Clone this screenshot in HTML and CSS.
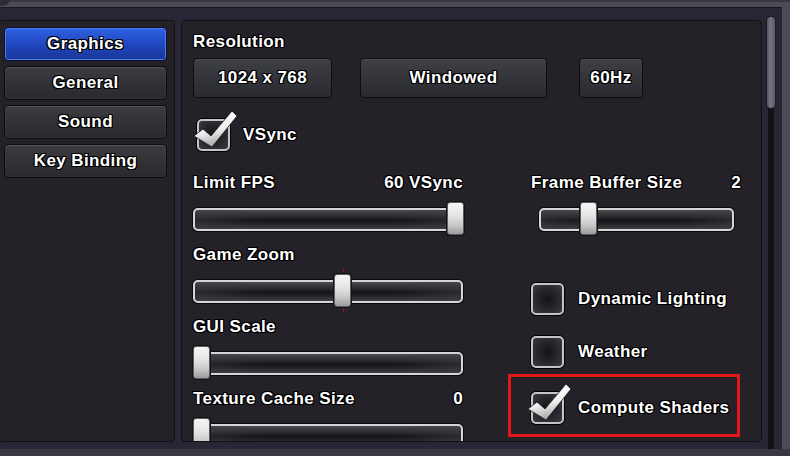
FILE: index.html
```html
<!DOCTYPE html>
<html>
<head>
<meta charset="utf-8">
<title>Graphics Settings</title>
<link rel="stylesheet" href="styles.css">
</head>
<body>
<div class="window">
  <div class="inner">
    <nav class="panel side">
      <div class="tab active">Graphics</div>
      <div class="tab">General</div>
      <div class="tab">Sound</div>
      <div class="tab">Key Binding</div>
    </nav>
    <main class="panel content">
      <div class="title">Resolution</div>
      <div class="btn-row">
        <div class="btn res">1024 x 768</div>
        <div class="btn mode">Windowed</div>
        <div class="btn hz">60Hz</div>
      </div>
      <div class="check-row vsync">
        <span class="box">
          <svg class="tick" viewBox="-6 -9 48 40" width="48" height="40"><defs><linearGradient id="tg1" x1="0" y1="0" x2="0.3" y2="1"><stop offset="0" stop-color="#ffffff"/><stop offset="0.6" stop-color="#f2f2f2"/><stop offset="1" stop-color="#a9a9a9"/></linearGradient></defs><polygon points="-3,17 6,10 14,17 35,-8 40,-3 15,28" fill="url(#tg1)" stroke="#1a1a1a" stroke-width="0.8" stroke-linejoin="round"/></svg>
        </span>
        <span class="lbl">VSync</span>
      </div>
      <div class="cols">
        <div class="col">
          <div class="slider-block">
            <div class="label-row"><span>Limit FPS</span><span>60 VSync</span></div>
            <div class="track-wrap"><div class="track"></div><div class="thumb" style="--p: 1"></div></div>
          </div>
          <div class="slider-block">
            <div class="label-row"><span>Game Zoom</span></div>
            <div class="track-wrap"><div class="track"></div><div class="thumb marked" style="--p: 0.555"></div></div>
          </div>
          <div class="slider-block">
            <div class="label-row"><span>GUI Scale</span></div>
            <div class="track-wrap"><div class="track"></div><div class="thumb" style="--p: 0"></div></div>
          </div>
          <div class="slider-block">
            <div class="label-row"><span>Texture Cache Size</span><span>0</span></div>
            <div class="track-wrap"><div class="track"></div><div class="thumb" style="--p: 0"></div></div>
          </div>
        </div>
        <div class="col">
          <div class="slider-block">
            <div class="label-row"><span>Frame Buffer Size</span><span>2</span></div>
            <div class="track-wrap narrow"><div class="track"></div><div class="thumb" style="--p: 0.229"></div></div>
          </div>
          <div class="check-row opt first">
            <span class="box"></span>
            <span class="lbl">Dynamic Lighting</span>
          </div>
          <div class="check-row opt second">
            <span class="box"></span>
            <span class="lbl">Weather</span>
          </div>
          <div class="check-row opt third highlight">
            <span class="box">
              <svg class="tick" viewBox="-6 -9 48 40" width="48" height="40"><defs><linearGradient id="tg2" x1="0" y1="0" x2="0.3" y2="1"><stop offset="0" stop-color="#ffffff"/><stop offset="0.6" stop-color="#f2f2f2"/><stop offset="1" stop-color="#a9a9a9"/></linearGradient></defs><polygon points="-3,17 6,10 14,17 35,-8 40,-3 15,28" fill="url(#tg2)" stroke="#1a1a1a" stroke-width="0.8" stroke-linejoin="round"/></svg>
            </span>
            <span class="lbl">Compute Shaders</span>
          </div>
        </div>
      </div>
    </main>
    <div class="scroll"><div class="scroll-thumb"></div></div>
  </div>
</div>
</body>
</html>
```

FILE: styles.css
```css
* { box-sizing: border-box; }

html, body {
  margin: 0;
  padding: 0;
  width: 790px;
  height: 456px;
  overflow: hidden;
  background: #4c4853;
}

body {
  font-family: "Liberation Sans", Arial, sans-serif;
  font-weight: bold;
  font-size: 17px;
  letter-spacing: 0.4px;
  color: #ffffff;
  text-shadow:
    -1px -1px 0 #000, 1px -1px 0 #000, -1px 1px 0 #000, 1px 1px 0 #000,
    0 1px 0 #000, 1px 0 0 #000, -1px 0 0 #000, 0 -1px 0 #000;
}

.window {
  width: 790px;
  height: 456px;
  background: #4e4a55;
  border-top: 2px solid #3a3640;
  border-bottom: 7px solid #3b3742;
  padding: 5px 8px 0 0;
  position: relative;
}

.window::before {
  content: "";
  position: absolute;
  left: -6px;
  top: -8px;
  width: 16px;
  height: 12px;
  border-radius: 50%;
  background: #2e2b34;
}

.inner {
  height: 100%;
  background: #2a2534;
  border-top: 1px solid #1a1720;
  display: flex;
  align-items: flex-start;
}

.panel {
  background: #242129;
  border: 1px solid #111015;
  border-radius: 4px;
  margin-top: 12px;
  height: 422px;
}

/* ---------- side navigation ---------- */
.side {
  width: 177px;
  margin-left: -2px;
  padding: 6px 0 0 5px;
  display: flex;
  flex-direction: column;
  gap: 5px;
}

.tab {
  width: 163px;
  height: 34px;
  display: flex;
  align-items: center;
  justify-content: center;
  border: 1px solid #0c0c0e;
  border-radius: 4px;
  background: linear-gradient(#3d3d41, #313135 55%, #2a2a2e);
  box-shadow: inset 0 1px 0 rgba(255,255,255,0.09), inset 0 0 0 1px rgba(255,255,255,0.03);
}

.tab.active {
  background: linear-gradient(#2f62e4, #2048c0 50%, #1a3698);
  box-shadow: inset 0 0 0 1px #5080f0;
  border-color: #0a0f25;
}

/* ---------- content ---------- */
.content {
  width: 581px;
  margin-left: 6px;
  padding: 11px 0 0 11px;
  overflow: hidden;
}

.title {
  height: 20px;
  line-height: 20px;
}

.btn-row {
  display: flex;
  margin-top: 6px;
  height: 40px;
}

.btn {
  height: 40px;
  display: flex;
  align-items: center;
  justify-content: center;
  border: 1px solid #0d0d10;
  border-radius: 4px;
  background: linear-gradient(#3e4045, #33353a 50%, #2a2b30);
  box-shadow: inset 0 1px 0 rgba(255,255,255,0.08);
}

.btn.res { width: 139px; }
.btn.mode { width: 187px; margin-left: 28px; }
.btn.hz { width: 64px; margin-left: 32px; }

.check-row {
  display: flex;
  align-items: center;
  height: 36px;
}

.vsync {
  margin-top: 19px;
  padding-left: 4px;
}

.box {
  position: relative;
  width: 33px;
  height: 32px;
  flex: none;
  border: 2px solid #c4c4c4;
  border-radius: 5px;
  background: radial-gradient(circle at 50% 50%, #141418 0%, #25252b 50%, #3c3c42 100%);
  box-shadow: 0 0 0 1px #000;
}

.tick {
  position: absolute;
  left: -8px;
  top: -11px;
  overflow: visible;
}

.lbl {
  margin-left: 13px;
}

.opt .lbl { margin-left: 14px; }

.cols {
  display: grid;
  grid-template-columns: 270px 210px;
  column-gap: 68px;
  margin-top: 18px;
}

.slider-block {
  height: 72px;
}

.label-row {
  height: 24px;
  line-height: 24px;
  display: flex;
  justify-content: space-between;
}

.track-wrap {
  position: relative;
  height: 48px;
  display: flex;
  align-items: center;
}

.track-wrap.narrow {
  margin-left: 8px;
  width: 195px;
}

.track {
  width: 100%;
  height: 23px;
  border: 2px solid #d6d6d6;
  border-radius: 5px;
  box-shadow: 0 0 0 1px #0a0a0c;
  background:
    linear-gradient(to right, rgba(60,60,66,0.5), rgba(0,0,0,0) 25%, rgba(0,0,0,0) 75%, rgba(60,60,66,0.5)),
    linear-gradient(#4b4b50 0%, #2e2e33 30%, #151518 55%, #2a2a2f 80%, #3d3d42 100%);
}

.thumb {
  position: absolute;
  top: 7px;
  left: calc((100% - 16px) * var(--p));
  width: 17px;
  height: 33px;
  border: 1px solid #5c5c60;
  border-radius: 3px;
  background: linear-gradient(#f6f6f6, #e2e2e2 45%, #c4c4c4 75%, #9c9c9c);
  box-shadow: 0 0 0 1px #141416;
}

.thumb.marked::before,
.thumb.marked::after {
  content: "";
  position: absolute;
  left: 8px;
  width: 1px;
  height: 3px;
  background: #a01818;
}
.thumb.marked::before { top: -6px; }
.thumb.marked::after { bottom: -6px; }

.opt.first { margin-top: 38px; }
.opt.second { margin-top: 17px; }
.opt.third { margin-top: 20px; }

.highlight {
  position: relative;
}

.highlight::after {
  content: "";
  position: absolute;
  left: -23px;
  right: 1px;
  top: -16px;
  bottom: -11px;
  border: 3px solid #e2171b;
  pointer-events: none;
}

/* ---------- scrollbar ---------- */
.scroll {
  position: relative;
  width: 20px;
  height: 432px;
  margin-top: 9px;
  padding-left: 6px;
}

.scroll::before {
  content: "";
  position: absolute;
  left: 6px;
  top: 0;
  bottom: 0;
  width: 6px;
  background: #131117;
}

.scroll-thumb {
  position: relative;
  width: 8px;
  margin-left: -1px;
  height: 91px;
  border-radius: 4px;
  background: linear-gradient(to right, #57535f, #76727e 45%, #5c5864);
  box-shadow: 0 0 0 1px #1d1a23;
}
```
